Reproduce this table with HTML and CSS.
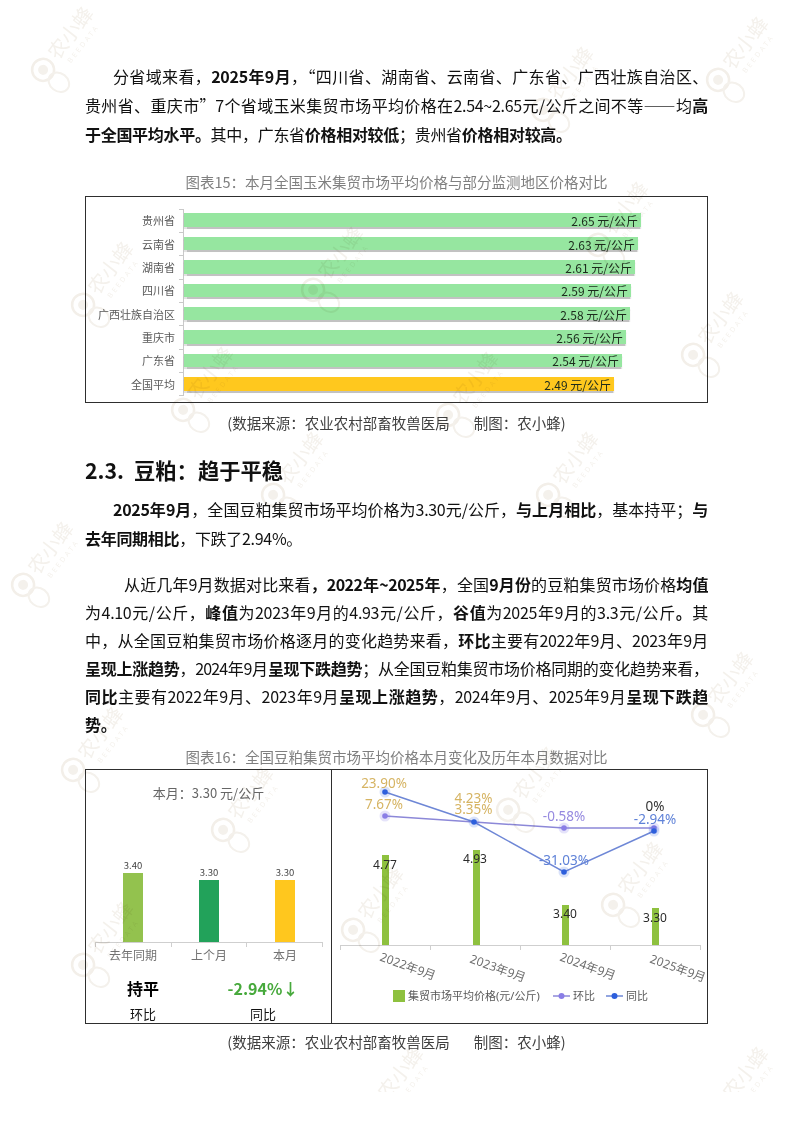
FILE: index.html
```
<!DOCTYPE html>
<html lang="zh-CN">
<head>
<meta charset="utf-8">
<title>豆粕</title>
<link rel="stylesheet" href="styles.css">
</head>
<body>
<div class="page">
  <p class="para p1">
    <span class="ln ind1">分省域来看，<b>2025年9月</b>，“四川省、湖南省、云南省、广东省、广西壮族自治区、</span>
    <span class="ln">贵州省、重庆市”7个省域玉米集贸市场平均价格在2.54~2.65元/公斤之间不等——均<b>高</b></span>
    <span class="ln last"><b>于全国平均水平。</b>其中，广东省<b>价格相对较低</b>；贵州省<b>价格相对较高。</b></span>
  </p>

  <div class="caption cap15">图表15：本月全国玉米集贸市场平均价格与部分监测地区价格对比</div>
  <div class="chart chart15">
    <div class="hrow"><span class="hlabel">贵州省</span><div class="htrack"><div class="hbar" style="width:457px"><span>2.65 元/公斤</span></div></div></div>
    <div class="hrow"><span class="hlabel">云南省</span><div class="htrack"><div class="hbar" style="width:454px"><span>2.63 元/公斤</span></div></div></div>
    <div class="hrow"><span class="hlabel">湖南省</span><div class="htrack"><div class="hbar" style="width:451px"><span>2.61 元/公斤</span></div></div></div>
    <div class="hrow"><span class="hlabel">四川省</span><div class="htrack"><div class="hbar" style="width:447px"><span>2.59 元/公斤</span></div></div></div>
    <div class="hrow"><span class="hlabel">广西壮族自治区</span><div class="htrack"><div class="hbar" style="width:446px"><span>2.58 元/公斤</span></div></div></div>
    <div class="hrow"><span class="hlabel">重庆市</span><div class="htrack"><div class="hbar" style="width:442px"><span>2.56 元/公斤</span></div></div></div>
    <div class="hrow"><span class="hlabel">广东省</span><div class="htrack"><div class="hbar" style="width:438px"><span>2.54 元/公斤</span></div></div></div>
    <div class="hrow"><span class="hlabel">全国平均</span><div class="htrack"><div class="hbar avg" style="width:430px"><span>2.49 元/公斤</span></div></div></div>
  </div>
  <div class="source src15">(数据来源：农业农村部畜牧兽医局<span class="gap"></span>制图：农小蜂)</div>

  <h2 class="h2"><span class="h2-num">2.3.</span>豆粕：趋于平稳</h2>

  <p class="para p2">
    <span class="ln ind1"><b>2025年9月</b>，全国豆粕集贸市场平均价格为3.30元/公斤，<b>与上月相比</b>，基本持平；<b>与</b></span>
    <span class="ln last"><b>去年同期相比</b>，下跌了2.94%。</span>
  </p>

  <p class="para p3">
    <span class="ln ind2 tight">从近几年9月数据对比来看<b>，2022年~2025年</b>，全国<b>9月份</b>的豆粕集贸市场价格<b>均值</b></span>
    <span class="ln">为4.10元/公斤，<b>峰值</b>为2023年9月的4.93元/公斤，<b>谷值</b>为2025年9月的3.3元/公斤<b>。</b>其</span>
    <span class="ln">中，从全国豆粕集贸市场价格逐月的变化趋势来看，<b>环比</b>主要有2022年9月、2023年9月</span>
    <span class="ln tighter"><b>呈现上涨趋势</b>，2024年9月<b>呈现下跌趋势</b>；从全国豆粕集贸市场价格同期的变化趋势来看，</span>
    <span class="ln"><b>同比</b>主要有2022年9月、2023年9月<b>呈现上涨趋势</b>，2024年9月、2025年9月<b>呈现下跌趋</b></span>
    <span class="ln last"><b>势。</b></span>
  </p>

  <div class="caption cap16">图表16：全国豆粕集贸市场平均价格本月变化及历年本月数据对比</div>
  <div class="chart chart16">
    <div class="summary">
      <div class="sum-title">本月：3.30 元/公斤</div>
      <div class="vbars">
        <div class="vcol"><span class="vval">3.40</span><span class="vbar c-last" style="height:69px"></span></div>
        <div class="vcol"><span class="vval">3.30</span><span class="vbar c-prev" style="height:62px"></span></div>
        <div class="vcol"><span class="vval">3.30</span><span class="vbar c-now" style="height:62px"></span></div>
      </div>
      <div class="vticks"><span></span><span></span><span></span></div>
      <div class="vcats"><span>去年同期</span><span>上个月</span><span>本月</span></div>
      <div class="stats">
        <div class="stat"><div class="stat-v">持平</div><div class="stat-k">环比</div></div>
        <div class="stat"><div class="stat-v down">-2.94%↓</div><div class="stat-k">同比</div></div>
      </div>
    </div>
    <div class="trend">
      <svg class="trend-svg" width="375" height="253" viewBox="0 0 375 253">
        <line x1="8" y1="175.5" x2="368" y2="175.5" stroke="#cfcfcf" stroke-width="1"/>
        <path d="M8.5 175v5M98.5 175v5M188.5 175v5M278.5 175v5M368.5 175v5" stroke="#cfcfcf" stroke-width="1"/>

        <rect class="tbar" x="50" y="85" width="7" height="90"/>
        <rect class="tbar" x="141" y="80" width="7" height="95"/>
        <rect class="tbar" x="230" y="135" width="7" height="40"/>
        <rect class="tbar" x="320" y="138" width="7" height="37"/>

        <text class="bval" x="53" y="99">4.77</text>
        <text class="bval" x="143" y="93">4.93</text>
        <text class="bval" x="233" y="148">3.40</text>
        <text class="bval" x="323" y="152">3.30</text>

        <polyline points="53,46 142,52 232,58 322,58" fill="none" stroke="#8c88d8" stroke-width="1.5"/>
        <polyline points="53,22 142,52 232,102 322,61" fill="none" stroke="#6e87d6" stroke-width="1.5"/>

        <g class="pt-hb">
          <circle cx="53" cy="46" r="5.5"/><circle cx="232" cy="58" r="5.5"/><circle cx="322" cy="58" r="5.5"/>
        </g>
        <g class="pt-hb-dot">
          <circle cx="53" cy="46" r="2.8"/><circle cx="232" cy="58" r="2.8"/><circle cx="322" cy="58" r="2.8"/>
        </g>
        <g class="pt-tb">
          <circle cx="53" cy="22" r="5.5"/><circle cx="142" cy="52" r="5.5"/><circle cx="232" cy="102" r="5.5"/><circle cx="322" cy="61" r="5.5"/>
        </g>
        <g class="pt-tb-dot">
          <circle cx="53" cy="22" r="2.8"/><circle cx="142" cy="52" r="2.8"/><circle cx="232" cy="102" r="2.8"/><circle cx="322" cy="61" r="2.8"/>
        </g>

        <text class="pl gold" x="52" y="17.5">23.90%</text>
        <text class="pl gold" x="52" y="38.5">7.67%</text>
        <text class="pl gold" x="141.5" y="32.5">4.23%</text>
        <text class="pl gold" x="141.5" y="43.5">3.35%</text>
        <text class="pl purple" x="232" y="50.5">-0.58%</text>
        <text class="pl blue" x="232" y="94.5">-31.03%</text>
        <text class="pl dark" x="323" y="40.5">0%</text>
        <text class="pl blue" x="323" y="53.5">-2.94%</text>

        <text class="cat" transform="translate(76 196) rotate(20)">2022年9月</text>
        <text class="cat" transform="translate(166 198) rotate(20)">2023年9月</text>
        <text class="cat" transform="translate(256 196) rotate(20)">2024年9月</text>
        <text class="cat" transform="translate(346 198) rotate(20)">2025年9月</text>

        <rect x="61" y="220" width="12" height="12" fill="#8ec13f"/>
        <text class="lg" x="76" y="230">集贸市场平均价格(元/公斤)</text>
        <line x1="221" y1="226" x2="238" y2="226" stroke="#8c88d8" stroke-width="1.5"/>
        <circle cx="229.5" cy="226" r="3" fill="#8a7ee6"/>
        <text class="lg" x="241" y="230">环比</text>
        <line x1="274" y1="226" x2="291" y2="226" stroke="#6e87d6" stroke-width="1.5"/>
        <circle cx="282.5" cy="226" r="3" fill="#2d5fdc"/>
        <text class="lg" x="294" y="230">同比</text>
      </svg>
    </div>
  </div>
  <div class="source src16">(数据来源：农业农村部畜牧兽医局<span class="gap"></span>制图：农小蜂)</div>
</div>

<svg class="wm-layer" width="793" height="1122" viewBox="0 0 793 1122" aria-hidden="true">
  <defs>
    <g id="bee">
      <g transform="rotate(-52)">
        <circle cx="-30" cy="2" r="11" fill="none" stroke="#f3efe9" stroke-width="2.5"/>
        <circle cx="-30" cy="2" r="5" fill="#f4f1ec"/>
        <ellipse cx="-30" cy="22" rx="9" ry="11" fill="none" stroke="#f4f1ec" stroke-width="2"/>
        <text x="-14" y="8" class="wm-t">农小蜂</text>
        <text x="-8" y="20" class="wm-s">BEEDATA</text>
      </g>
    </g>
  </defs>
  <use href="#bee" x="60" y="45"/>
  <use href="#bee" x="560" y="85"/>
  <use href="#bee" x="735" y="55"/>
  <use href="#bee" x="330" y="265"/>
  <use href="#bee" x="615" y="220"/>
  <use href="#bee" x="100" y="280"/>
  <use href="#bee" x="200" y="385"/>
  <use href="#bee" x="465" y="390"/>
  <use href="#bee" x="710" y="330"/>
  <use href="#bee" x="290" y="470"/>
  <use href="#bee" x="565" y="470"/>
  <use href="#bee" x="90" y="745"/>
  <use href="#bee" x="525" y="785"/>
  <use href="#bee" x="240" y="805"/>
  <use href="#bee" x="370" y="905"/>
  <use href="#bee" x="630" y="880"/>
  <use href="#bee" x="100" y="940"/>
  <use href="#bee" x="40" y="560"/>
  <use href="#bee" x="720" y="690"/>
  <use href="#bee" x="735" y="1085"/>
  <use href="#bee" x="390" y="1085"/>
</svg>
</body>
</html>
```

FILE: styles.css
```
* { box-sizing: border-box; }

body {
  margin: 0;
  background: #ffffff;
  font-family: "Noto Sans CJK SC", "Noto Sans", sans-serif;
  color: #111111;
  position: relative;
}

.page {
  width: 793px;
  padding: 62px 85px 40px;
}

b { font-weight: 700; }

/* paragraphs */
.para {
  margin: 0;
  font-size: 16px;
}
.p1, .p2 { line-height: 29px; }
.p3 { line-height: 28px; }

.ln {
  display: block;
  text-align: justify;
  text-align-last: justify;
  letter-spacing: -0.3px;
}
.ln.last { text-align-last: left; }
.ln.tight { letter-spacing: -0.5px; }
.ln.tighter { letter-spacing: -0.9px; }
.ind1 { text-indent: 28px; }
.ind2 { text-indent: 39px; }

.p2 { margin-top: 10.5px; }
.p3 { margin-top: 16.5px; }

/* captions and sources */
.caption {
  font-size: 14.5px;
  line-height: 20px;
  color: #7f7f7f;
  text-align: center;
}
.cap15 { margin-top: 22.5px; }
.cap16 { margin-top: 9px; }

.source {
  font-size: 14.5px;
  line-height: 20px;
  color: #3f3f3f;
  text-align: center;
}
.source .gap { display: inline-block; width: 24px; }
.src15 { margin-top: 10px; }
.src16 { margin-top: 8px; }

.h2 {
  margin: 22px 0 0;
  font-size: 21.3px;
  line-height: 30px;
  font-weight: 700;
  color: #111;
}
.h2-num { margin-right: 10px; }

/* chart frames */
.chart {
  border: 1px solid #2e2e2e;
  background: #fff;
}

/* chart 15 - horizontal bars */
.chart15 {
  margin-top: 4px;
  height: 207px;
  padding-top: 12px;
}
.hrow {
  display: grid;
  grid-template-columns: 89px 1fr;
  column-gap: 8px;
  height: 23.375px;
  align-items: stretch;
}
.hlabel {
  font-size: 11px;
  color: #595959;
  text-align: right;
  align-self: center;
  line-height: 14px;
}
.htrack {
  border-left: 1px solid #c9c9c9;
  display: flex;
  align-items: center;
  position: relative;
}
.htrack::before {
  content: "";
  position: absolute;
  left: -5px;
  top: 0;
  width: 4px;
  border-top: 1px solid #c9c9c9;
}
.hrow:last-child .htrack::after {
  content: "";
  position: absolute;
  left: -5px;
  bottom: 0;
  width: 4px;
  border-top: 1px solid #c9c9c9;
}
.hbar {
  height: 13.5px;
  background: #96e6a0;
  box-shadow: 0 1.5px 1px rgba(120, 120, 120, 0.45);
  display: flex;
  justify-content: flex-end;
  align-items: center;
  padding-right: 3px;
}
.hbar span {
  font-size: 12px;
  line-height: 13px;
  color: #1c2a1c;
  white-space: nowrap;
  padding-top: 1px;
}
.hbar.avg { background: #ffc81e; }

/* chart 16 */
.chart16 {
  margin-top: 2px;
  height: 255px;
  display: grid;
  grid-template-columns: 246px 1fr;
}
.summary {
  border-right: 1px solid #2e2e2e;
}
.sum-title {
  padding-top: 13px;
  line-height: 20px;
  font-size: 13px;
  color: #666;
  text-align: center;
}
.vbars {
  margin-left: 9px;
  width: 228px;
  height: 140px;
  display: flex;
  align-items: flex-end;
  border-bottom: 1px solid #cfcfcf;
}
.vcol {
  flex: 1;
  display: flex;
  flex-direction: column;
  align-items: center;
}
.vval {
  font-size: 9.5px;
  line-height: 11px;
  color: #444;
  margin-bottom: 2px;
}
.vbar { display: block; width: 20px; }
.c-last { background: #93c24e; }
.c-prev { background: #22a25a; }
.c-now { background: #ffc71e; }

.vticks {
  margin-left: 9px;
  width: 228px;
  height: 4px;
  display: flex;
}
.vticks span { flex: 1; border-left: 1px solid #cfcfcf; }
.vticks span:last-child { border-right: 1px solid #cfcfcf; }

.vcats {
  margin-left: 9px;
  width: 228px;
  display: flex;
  font-size: 12px;
  line-height: 16px;
  color: #737373;
}
.vcats span { flex: 1; text-align: center; }

.stats {
  display: grid;
  grid-template-columns: 114px 126px;
  margin-top: 14px;
  text-align: center;
}
.stat-v {
  font-size: 16px;
  font-weight: 700;
  line-height: 22px;
  color: #000;
}
.stat-v.down { color: #47a93c; }
.stat-k {
  margin-top: 6px;
  font-size: 13px;
  line-height: 18px;
  color: #111;
}

.trend { overflow: hidden; }
.trend-svg { display: block; }
.trend-svg text { font-family: "Noto Sans", "Noto Sans CJK SC", sans-serif; }
.tbar { fill: #8ec13f; }
.bval { font-size: 12px; fill: #2b2b2b; text-anchor: middle; }
.pl { font-size: 13.5px; text-anchor: middle; }
.gold { fill: #d6b463; }
.purple { fill: #968ae0; }
.blue { fill: #5f82d8; }
.dark { fill: #333; }
.pt-hb circle { fill: #8a7ee6; fill-opacity: 0.22; }
.pt-hb-dot circle { fill: #8a7ee6; }
.pt-tb circle { fill: #2d5fdc; fill-opacity: 0.18; }
.pt-tb-dot circle { fill: #2d5fdc; }
.cat { font-size: 12px; fill: #6e6e6e; text-anchor: middle; dominant-baseline: central; }
.lg { font-size: 11px; fill: #595959; }

/* watermark overlay */
.wm-layer {
  position: absolute;
  left: 0;
  top: 0;
  pointer-events: none;
  mix-blend-mode: multiply;
}
.wm-t {
  font-family: "Noto Sans CJK SC", sans-serif;
  font-size: 20px;
  fill: #f4f1ec;
}
.wm-s {
  font-family: "Noto Sans", sans-serif;
  font-size: 7px;
  letter-spacing: 2.5px;
  fill: #f4f1ec;
}
```
